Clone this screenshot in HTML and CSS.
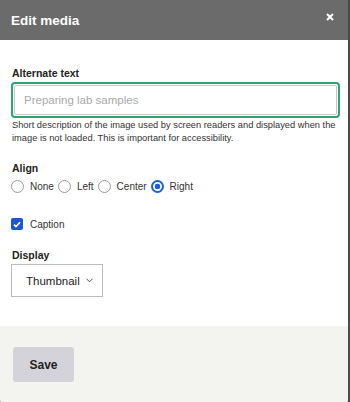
FILE: index.html
```html
<!DOCTYPE html>
<html lang="en">
<head>
  <meta charset="UTF-8">
  <title>Edit media</title>
  <link rel="stylesheet" href="styles.css">
</head>
<body>
  <div class="dialog">
    <header class="dialog-header">
      <h1>Edit media</h1>
      <svg class="close" width="8" height="8" viewBox="0 0 8 8"><path d="M1 1 L7 7 M7 1 L1 7" stroke="#fff" stroke-width="2"/></svg>
    </header>

    <form class="dialog-body">
      <div class="field field-alt">
        <label class="label" for="alt">Alternate text</label>
        <div class="input-wrap">
          <input type="text" id="alt" placeholder="Preparing lab samples">
        </div>
        <p class="help">Short description of the image used by screen readers and displayed when the image is not loaded. This is important for accessibility.</p>
      </div>

      <div class="field field-align">
        <div class="label">Align</div>
        <div class="radios">
          <label class="radio"><span class="dot"></span>None</label>
          <label class="radio"><span class="dot"></span>Left</label>
          <label class="radio"><span class="dot"></span>Center</label>
          <label class="radio"><span class="dot checked"></span>Right</label>
        </div>
      </div>

      <label class="check">
        <span class="box">
          <svg width="8" height="7" viewBox="0 0 8 7"><path d="M1 3.6 L3 5.5 L7 1.2" fill="none" stroke="#fff" stroke-width="1.6"/></svg>
        </span>
        Caption
      </label>

      <div class="field field-display">
        <div class="label">Display</div>
        <div class="select">
          Thumbnail
          <svg width="7" height="5" viewBox="0 0 7 5"><path d="M0.5 0.8 L3.5 3.8 L6.5 0.8" fill="none" stroke="#555" stroke-width="1"/></svg>
        </div>
      </div>
    </form>

    <footer class="dialog-footer">
      <button class="btn">Save</button>
    </footer>
  </div>
</body>
</html>
```

FILE: styles.css
```css
html, body {
  margin: 0;
  height: 100%;
}
body {
  background: #4a4a4a;
  font-family: "Liberation Sans", Arial, sans-serif;
  color: #222;
}
.dialog {
  width: 348px;
  height: 402px;
  background: #fff;
  display: flex;
  flex-direction: column;
  border-radius: 0 0 2px 2px;
  overflow: hidden;
}
.dialog-header {
  height: 40px;
  background: #6b6b6b;
  display: flex;
  align-items: center;
  justify-content: space-between;
  padding: 0 14px 0 11px;
  box-sizing: border-box;
}
.dialog-header h1 {
  margin: 0;
  font-size: 13.5px;
  font-weight: 700;
  color: #fff;
}
.close {
  margin-bottom: 6px;
}
.dialog-body {
  flex: 1;
  padding: 27px 8px 0 11px;
  margin: 0;
}
.label {
  display: block;
  font-size: 10.5px;
  line-height: 12px;
  font-weight: 700;
  color: #222;
  margin: 0 0 3px 1px;
}
.input-wrap {
  border: 2px solid #2fa36b;
  border-radius: 4px;
  padding: 1px;
  height: 36px;
  box-sizing: border-box;
}
.input-wrap input {
  width: 100%;
  height: 100%;
  box-sizing: border-box;
  border: 1px solid #c6c6c6;
  border-radius: 2px;
  outline: none;
  padding: 0 0 0 9px;
  font-family: inherit;
  font-size: 11.5px;
  color: #222;
  caret-color: #555;
}
.input-wrap input::placeholder {
  color: #a9a9a9;
}
.help {
  margin: 1px 0 0 1px;
  font-size: 9.3px;
  line-height: 13px;
  color: #333;
}
.field-align {
  margin-top: 17px;
}
.radios {
  display: flex;
  align-items: center;
  margin-top: 6px;
}
.radio {
  display: flex;
  align-items: center;
  font-size: 10px;
  color: #333;
  margin-right: 4px;
}
.dot {
  width: 13px;
  height: 13px;
  box-sizing: border-box;
  border: 1px solid #9a9a9a;
  border-radius: 50%;
  margin-right: 6px;
  background: #fff;
}
.dot.checked {
  border: 2px solid #1a5fdc;
  background: radial-gradient(circle, #1a5fdc 0 2.6px, #fff 3.1px);
}
.check {
  display: flex;
  align-items: center;
  font-size: 10px;
  color: #333;
  margin-top: 25px;
}
.box {
  width: 12px;
  height: 12px;
  background: #1a56d6;
  border-radius: 2px;
  display: flex;
  align-items: center;
  justify-content: center;
  margin-right: 7px;
}
.field-display {
  margin-top: 19px;
}
.select {
  width: 92px;
  height: 33px;
  box-sizing: border-box;
  border: 1px solid #bcbcbc;
  display: flex;
  align-items: center;
  gap: 6px;
  padding-left: 14px;
  font-size: 11.5px;
  color: #222;
}
.dialog-footer {
  height: 76px;
  flex: none;
  background: #f3f3ef;
  padding: 21px 0 0 13px;
  box-sizing: border-box;
}
.btn {
  width: 61px;
  height: 35px;
  background: #d4d3d9;
  border: none;
  border-radius: 3px;
  font-family: inherit;
  font-size: 12px;
  font-weight: 700;
  color: #222;
}
```
